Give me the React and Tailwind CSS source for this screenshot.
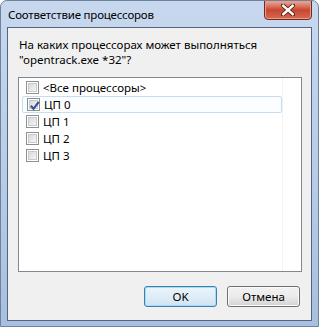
import React from 'react';

const ITEMS = [
  { label: '<Все процессоры>', checked: false },
  { label: 'ЦП 0', checked: true, focused: true },
  { label: 'ЦП 1', checked: false },
  { label: 'ЦП 2', checked: false },
  { label: 'ЦП 3', checked: false },
];

const FONT = { fontFamily: '"Segoe UI", "Noto Sans", "Open Sans", sans-serif' };

function CheckBox({ checked }) {
  return (
    <span className="w-[13px] h-[13px] shrink-0 border border-[#8e8f8f] bg-white p-px">
      <span className="relative block w-full h-full border border-[#c9cacb] bg-gradient-to-br from-[#d9d9da] to-[#f6f6f6]">
        {checked && (
          <svg viewBox="0 0 9 9" className="absolute -left-px -top-px w-[11px] h-[11px]">
            <path d="M1.5 4.8 L3.7 7.2 L8 1.5" fill="none" stroke="#3b5292" strokeWidth="1.8" />
          </svg>
        )}
      </span>
    </span>
  );
}

function Button({ children, isDefault }) {
  return (
    <button
      className={`w-[73px] h-[21px] rounded-[3px] border text-[11.5px] text-black leading-none flex items-center justify-center ${
        isDefault
          ? 'border-[#3c7fb1] shadow-[inset_0_0_0_1px_#a8dcf5] bg-gradient-to-b from-[#eaf4fb] via-[#e0edf7] to-[#cfe2f0]'
          : 'border-[#707070] shadow-[inset_0_0_0_1px_#fbfbfb] bg-gradient-to-b from-[#f2f2f2] via-[#ebebeb] to-[#d3d3d3]'
      }`}
      style={FONT}
    >
      {children}
    </button>
  );
}

export default function App() {
  return (
    <div
      className="relative w-[319px] h-[327px] rounded-t-[7px] border border-[#6e829c] bg-gradient-to-b from-[#c7d8ee] via-[#b9cde8] to-[#a7bfe0] overflow-hidden"
      style={FONT}
    >
      {/* Title bar */}
      <div className="h-[26px] pl-[7px] pt-[6px] text-[11.5px] leading-[15px] tracking-[-0.2px] text-black">
        Соответствие процессоров
      </div>

      {/* Close button */}
      <div className="absolute top-[-1px] left-[263px] w-[48px] h-[20px] rounded-b-[4px] border border-[#6b2c22] bg-gradient-to-b from-[#e8aa9c] via-[#c9452e] to-[#d8694f] shadow-[inset_0_0_0_1px_#eb9b88] flex items-center justify-center">
        <svg viewBox="0 0 14 12" className="w-[14px] h-[12px]">
          <path d="M2 1.5 L12 10.5 M12 1.5 L2 10.5" stroke="#5a2018" strokeWidth="4.2" strokeLinecap="square" />
          <path d="M2.3 1.8 L11.7 10.2 M11.7 1.8 L2.3 10.2" stroke="#ffffff" strokeWidth="2.4" strokeLinecap="square" />
        </svg>
      </div>

      {/* Client area */}
      <div className="ml-[6px] w-[305px] h-[294px] border border-[#54657d] bg-[#f0f0f0] flex flex-col pl-[10px] pt-[9px]">
        <div className="pl-px text-[11.5px] text-black">
          <div className="h-[15px] leading-[15px]">На каких процессорах может выполняться</div>
          <div className="h-[15px] leading-[15px]">"opentrack.exe *32"?</div>
        </div>

        {/* List */}
        <div className="mt-[10px] w-[284px] h-[195px] border border-[#828790] bg-white pt-[1px] pl-[3px] relative">
          <div className="absolute top-0 bottom-0 left-[263px] w-px bg-[#f3f3f3]" />
          {ITEMS.map((item) => (
            <div
              key={item.label}
              className={`w-[260px] h-[17px] flex items-center gap-[4px] pl-[4px] text-[11.5px] text-black ${
                item.focused ? 'border border-[#c7dcef] bg-[#fbfdff] rounded-[2px] pl-[3px]' : ''
              }`}
            >
              <CheckBox checked={item.checked} />
              <span className="leading-none">{item.label}</span>
            </div>
          ))}
        </div>

        {/* Buttons */}
        <div className="mt-[14px] w-[282px] flex justify-end gap-[10px]">
          <Button isDefault>OK</Button>
          <Button>Отмена</Button>
        </div>
      </div>
    </div>
  );
}
